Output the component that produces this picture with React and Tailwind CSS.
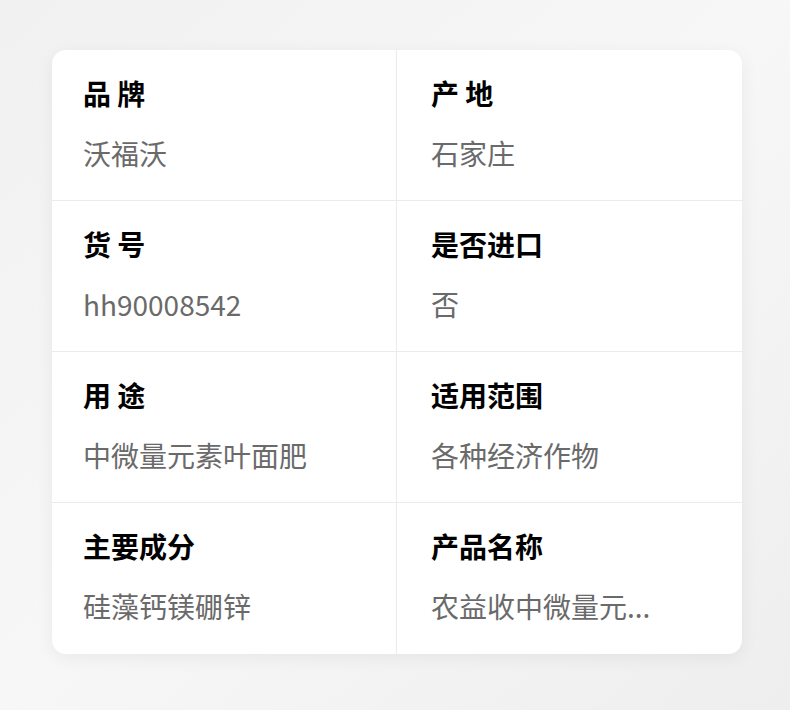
import React from "react";

const items = [
  { label: "品 牌", value: "沃福沃" },
  { label: "产 地", value: "石家庄" },
  { label: "货 号", value: "hh90008542" },
  { label: "是否进口", value: "否" },
  { label: "用 途", value: "中微量元素叶面肥" },
  { label: "适用范围", value: "各种经济作物" },
  { label: "主要成分", value: "硅藻钙镁硼锌" },
  { label: "产品名称", value: "农益收中微量元..." },
];

function Cell({ label, value, right, last }) {
  return (
    <div
      className={
        "flex h-[151px] flex-col gap-[18px] pt-[22px] " +
        (right ? "pl-[34px] " : "pl-[31px] border-r border-[#ebebeb] ") +
        (last ? "" : "border-b border-[#ebebeb]")
      }
    >
      <div className="text-[28px] font-bold leading-[42px] text-black">{label}</div>
      <div className="text-[28px] leading-[42px] text-[#6a6a6a]">{value}</div>
    </div>
  );
}

export default function App() {
  return (
    <div
      className="min-h-[710px] w-full bg-gradient-to-br from-[#f1f1f1] via-[#f7f7f7] to-[#eeeeee] pt-[50px] pl-[52px]"
      style={{ fontFamily: '"Noto Sans CJK SC", "Noto Sans", sans-serif' }}
    >
      <div className="grid w-[690px] grid-cols-2 overflow-hidden rounded-[14px] bg-white shadow-[0_4px_18px_rgba(0,0,0,0.06)]">
        {items.map((x, i) => (
          <Cell key={x.label} {...x} right={i % 2 === 1} last={i >= 6} />
        ))}
      </div>
    </div>
  );
}
